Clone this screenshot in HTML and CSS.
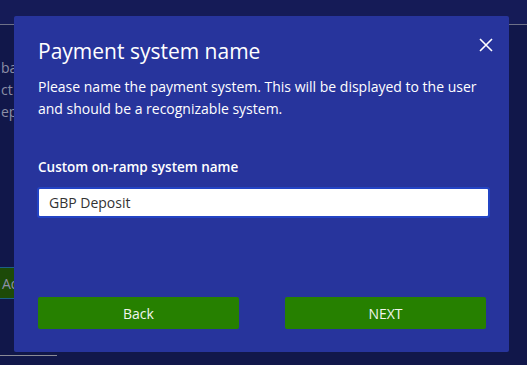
FILE: index.html
```html
<!DOCTYPE html>
<html lang="en">
<head>
    <meta charset="UTF-8">
    <meta name="viewport" content="width=device-width, initial-scale=1.0">
    <title>Payment system name</title>
    <link rel="stylesheet" href="styles.css">
</head>
<body>
    <div class="page">
        <div class="page-header"></div>
        <div class="page-body">
            <p class="page-text">ban<br>ct<br>epo</p>
            <button class="page-button">Add</button>
            <div class="page-rule"></div>
        </div>
    </div>

    <div class="overlay">
        <div class="modal">
            <button class="modal-close" aria-label="Close">
                <svg width="14" height="14" viewBox="0 0 14 14">
                    <path d="M1 1 L13 13 M13 1 L1 13" stroke="#ffffff" stroke-width="1.6" fill="none"/>
                </svg>
            </button>
            <h2 class="modal-title">Payment system name</h2>
            <p class="modal-text">Please name the payment system. This will be displayed to the user and should be a recognizable system.</p>

            <label class="field-label" for="system-name">Custom on-ramp system name</label>
            <input class="field-input" id="system-name" type="text" value="GBP Deposit">

            <div class="modal-actions">
                <button class="btn">Back</button>
                <button class="btn">NEXT</button>
            </div>
        </div>
    </div>
</body>
</html>
```

FILE: styles.css
```css
body {
    font-family: "Open Sans", Arial, sans-serif;
    background-color: #11174a;
    margin: 0;
    padding: 0;
    color: #ffffff;
    overflow: hidden;
}
.page {
    height: 365px;
}
.page-header {
    height: 24px;
    background-color: #151b57;
    border-bottom: 1px solid #6d7088;
}
.page-body {
    padding-top: 32px;
}
.page-text {
    margin: 0 0 0 1px;
    font-size: 14px;
    line-height: 22px;
    color: #8c8fa6;
}
.page-button {
    display: block;
    margin-top: 144px;
    padding: 0 2px;
    height: 32px;
    font-family: inherit;
    font-size: 14px;
    color: #8c8fa6;
    background-color: #1d4a08;
    border: 1px solid #1d5f86;
    border-left: none;
    border-radius: 0 2px 2px 0;
    text-align: left;
    width: 60px;
}
.page-rule {
    margin-top: 56px;
    width: 57px;
    border-top: 1px solid #8a8a96;
}
.overlay {
    position: fixed;
    top: 0;
    left: 0;
    right: 0;
    bottom: 0;
    padding: 16px 0 0 14px;
}
.modal {
    position: relative;
    box-sizing: border-box;
    width: 495px;
    height: 336px;
    padding: 20px 23px 23px 24px;
    background-color: #27349c;
    border-radius: 2px;
    display: flex;
    flex-direction: column;
}
.modal-close {
    position: absolute;
    top: 21px;
    right: 15px;
    width: 16px;
    height: 16px;
    padding: 1px;
    background: none;
    border: none;
    cursor: pointer;
}
.modal-title {
    margin: 0;
    font-size: 21px;
    font-weight: 400;
    line-height: 30px;
}
.modal-text {
    margin: 10px 0 0;
    font-size: 14px;
    line-height: 22px;
}
.field-label {
    margin-top: 37px;
    font-size: 13.5px;
    font-weight: 600;
    line-height: 20px;
}
.field-input {
    margin: 10px -4px 0 -1px;
    height: 31px;
    box-sizing: border-box;
    padding: 0 10px;
    font-family: inherit;
    font-size: 14px;
    color: #333333;
    background-color: #ffffff;
    border: 2px solid #2344c4;
    border-radius: 3px;
    outline: none;
}
.modal-actions {
    margin-top: auto;
    display: grid;
    grid-template-columns: 1fr 1fr;
    gap: 46px;
}
.btn {
    height: 32px;
    font-family: inherit;
    font-size: 14px;
    color: #f2f5ee;
    background-color: #268000;
    border: none;
    border-radius: 2px;
    cursor: pointer;
}
```
